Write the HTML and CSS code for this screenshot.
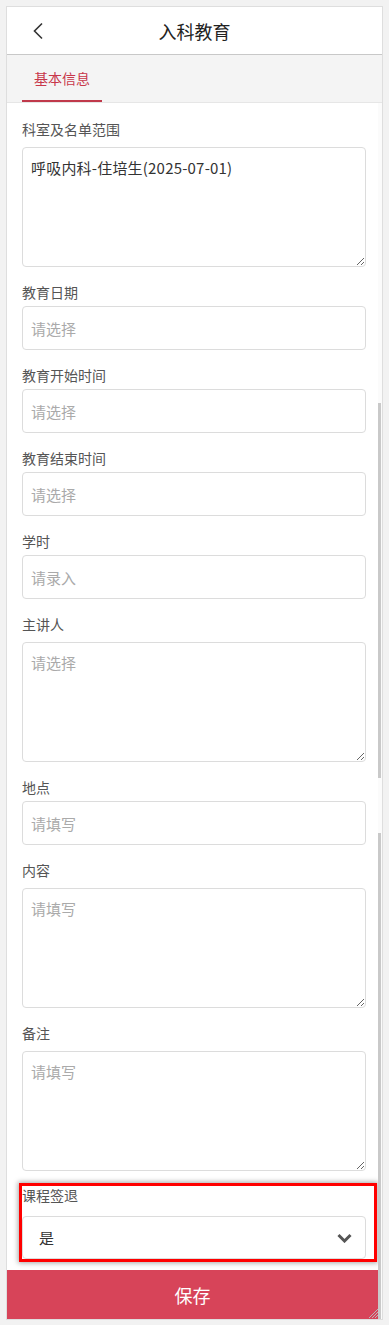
FILE: index.html
```html
<!DOCTYPE html>
<html lang="zh-CN">
<head>
<meta charset="utf-8">
<title>入科教育</title>
<link rel="stylesheet" href="styles.css">
</head>
<body>
<div class="frame">
  <header class="nav">
    <svg class="back" width="12" height="18" viewBox="0 0 12 18"><path d="M10 1.5 L2.5 9 L10 16.5" fill="none" stroke="#333" stroke-width="1.6"/></svg>
    <h1 class="title">入科教育</h1>
  </header>
  <nav class="tabs"><div class="tab active">基本信息</div></nav>
  <div class="main">
    <div class="col">
      <form class="form">
        <div class="group ta">
          <label class="lbl">科室及名单范围</label>
          <textarea class="box area filled">呼吸内科-住培生(2025-07-01)</textarea>
        </div>
        <div class="group">
          <label class="lbl">教育日期</label>
          <input class="box field" placeholder="请选择">
        </div>
        <div class="group">
          <label class="lbl">教育开始时间</label>
          <input class="box field" placeholder="请选择">
        </div>
        <div class="group">
          <label class="lbl">教育结束时间</label>
          <input class="box field" placeholder="请选择">
        </div>
        <div class="group">
          <label class="lbl">学时</label>
          <input class="box field" placeholder="请录入">
        </div>
        <div class="group ta">
          <label class="lbl">主讲人</label>
          <textarea class="box area" placeholder="请选择"></textarea>
        </div>
        <div class="group">
          <label class="lbl">地点</label>
          <input class="box field" placeholder="请填写">
        </div>
        <div class="group ta">
          <label class="lbl">内容</label>
          <textarea class="box area" placeholder="请填写"></textarea>
        </div>
        <div class="group ta">
          <label class="lbl">备注</label>
          <textarea class="box area" placeholder="请填写"></textarea>
        </div>
        <div class="group sel highlight">
          <label class="lbl">课程签退</label>
          <div class="box select">
            <span>是</span>
            <svg width="15" height="10" viewBox="0 0 15 10"><path d="M1.5 2 L7.5 8 L13.5 2" fill="none" stroke="#555" stroke-width="3"/></svg>
          </div>
        </div>
      </form>
      <button class="save" type="button">保存</button>
    </div>
    <div class="track">
      <div class="thumb t1"></div>
      <div class="thumb t2"></div>
    </div>
  </div>
  <svg class="grip" width="12" height="12" viewBox="0 0 12 12"><path d="M11 2 L2 11 M11 5 L5 11 M11 8 L8 11" stroke="#b9b9b9" stroke-width="1"/></svg>
</div>
</body>
</html>
```

FILE: styles.css
```css
* { box-sizing: border-box; }
html, body { margin: 0; padding: 0; }
body {
  background: #f2f2f2;
  font-family: "Noto Sans CJK SC", "Noto Sans", sans-serif;
  width: 389px;
  height: 1325px;
  overflow: hidden;
}
.frame {
  position: relative;
  margin: 6px 0 0 6px;
  width: 377px;
  height: 1314px;
  border: 1px solid #dedede;
  background: #fff;
  display: flex;
  flex-direction: column;
}
.nav {
  height: 48px;
  flex: none;
  border-bottom: 1px solid #c8c8c8;
  display: flex;
  align-items: center;
  justify-content: center;
  position: relative;
  background: #fff;
}
.back {
  position: absolute;
  left: 25px;
  top: 15px;
}
.title {
  margin: 0;
  font-size: 18px;
  font-weight: 400;
  color: #222;
  line-height: 24px;
}
.tabs {
  height: 48px;
  flex: none;
  background: #f4f4f4;
  border-bottom: 1px solid #e6e6e6;
  padding-left: 15px;
  display: flex;
}
.tab {
  width: 80px;
  height: 47px;
  text-align: center;
  font-size: 14px;
  line-height: 46px;
  color: #c8374b;
  border-bottom: 2px solid #c0394b;
}
.main {
  flex: 1;
  min-height: 0;
  display: flex;
}
.col {
  flex: 1;
  min-width: 0;
  display: flex;
  flex-direction: column;
}
.form {
  flex: 1;
  min-height: 0;
  overflow: hidden;
  padding: 16px 4px 0 15px;
  margin: 0;
}
.group {
  display: flex;
  flex-direction: column;
  margin-bottom: 15px;
}
.lbl {
  font-size: 14px;
  line-height: 20px;
  color: #555;
  margin-bottom: 4px;
}
.group.ta .lbl { margin-bottom: 8px; }
.box {
  width: 344px;
  border: 1px solid #dcdcdc;
  border-radius: 4px;
  background: #fff;
  font-family: "Noto Sans CJK SC", "Noto Sans", sans-serif;
  font-size: 15px;
  color: #333;
  outline: none;
}
.field {
  height: 44px;
  padding: 0 8px;
  margin: 0;
}
.area {
  height: 120px;
  padding: 10px 8px;
  line-height: 20px;
  margin: 0;
  resize: vertical;
  display: block;
}
.area.filled { letter-spacing: 0.2px; }
.field::placeholder, .area::placeholder { color: #aaa; }
.group.sel { margin-top: 3px; }
.group.sel .lbl { line-height: 18px; margin-bottom: 12px; }
.highlight {
  box-shadow: 0 0 0 3px #ff0000, 0 0 5px 4px rgba(0, 0, 0, 0.35);
}
.select {
  height: 43px;
  padding: 0 13px 0 16px;
  display: flex;
  align-items: center;
  justify-content: space-between;
}
.save {
  flex: none;
  height: 49px;
  border: 0;
  margin: 0;
  background: #d74459;
  color: #fff;
  font-family: "Noto Sans CJK SC", "Noto Sans", sans-serif;
  font-size: 18px;
  padding: 0;
}
.track {
  width: 4px;
  flex: none;
  display: flex;
  flex-direction: column;
  background: #fbfbfb;
}
.thumb {
  width: 3px;
  margin-left: 0;
  background: #c9c9c9;
}
.t1 { margin-top: 300px; height: 375px; }
.t2 { margin-top: 55px; flex: 1; }
.grip {
  position: absolute;
  right: 3px;
  bottom: 0;
}
```
